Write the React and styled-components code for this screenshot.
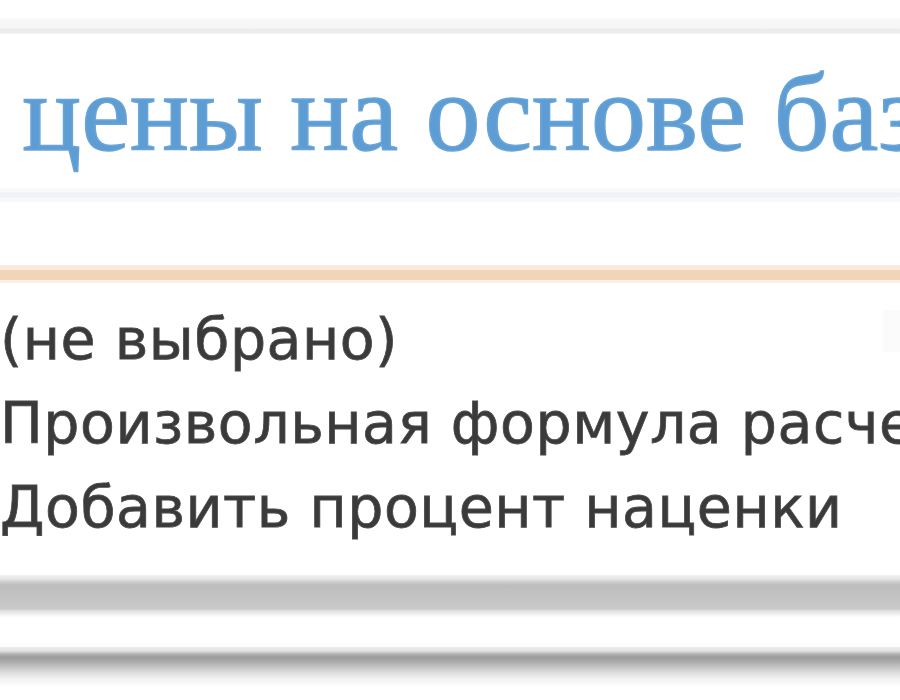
import styled, { createGlobalStyle } from "styled-components";

const GlobalStyle = createGlobalStyle`
  html, body {
    margin: 0;
    padding: 0;
    background: #ffffff;
    overflow: hidden;
  }
`;

const options = [
  "(не выбрано)",
  "Произвольная формула расчета цены",
  "Добавить процент наценки",
];

export default function App() {
  return (
    <>
      <GlobalStyle />
      <Page>
        <TopStrip />
        <TitleBox>
          <Title>Расчёт цены на основе базовой цены</Title>
        </TitleBox>
        <Divider />
        <Gap />
        <SelectPanel>
          <OptionList>
            {options.map((o) => (
              <Option key={o}>{o}</Option>
            ))}
          </OptionList>
          <ScrollHint />
        </SelectPanel>
        <Shelf />
        <Spacer />
        <Rail />
      </Page>
    </>
  );
}

const Page = styled.div`
  width: 900px;
  height: 700px;
  display: flex;
  flex-direction: column;
  overflow: hidden;
`;

const TopStrip = styled.div`
  height: 34px;
  flex-shrink: 0;
  background: linear-gradient(
    to bottom,
    #ffffff 0px,
    #ffffff 18px,
    #f8f8f8 19px,
    #f6f6f6 28px,
    #ececec 29px,
    #ececec 33px,
    #ffffff 34px
  );
`;

const TitleBox = styled.div`
  height: 154px;
  flex-shrink: 0;
  overflow: hidden;
`;

const Title = styled.h1`
  margin: 0;
  padding-top: 14px;
  white-space: nowrap;
  text-indent: -314px;
  font-family: "Liberation Serif", "Times New Roman", serif;
  font-weight: normal;
  font-size: 110px;
  line-height: 130px;
  color: #5e9dd3;
  -webkit-text-stroke: 1.4px #6aa5d8;
`;

const Divider = styled.div`
  height: 14px;
  flex-shrink: 0;
  background: linear-gradient(
    to bottom,
    #f7f9fb 0px,
    #f7f9fb 4px,
    #eef3f8 5px,
    #eef3f8 9px,
    #f6f8fb 10px,
    #f6f8fb 14px
  );
`;

const Gap = styled.div`
  height: 63px;
  flex-shrink: 0;
`;

const SelectPanel = styled.div`
  position: relative;
  height: 305px;
  flex-shrink: 0;
  border-top: 5px solid #fcebdd;
  box-shadow: inset 0 10px 0 #f2d4bb, inset 0 13px 0 #fbefe6;
  overflow: hidden;
`;

const OptionList = styled.ul`
  list-style: none;
  margin: 0;
  padding: 27px 0 0 0;
`;

const Option = styled.li`
  white-space: nowrap;
  font-family: "DejaVu Sans", Verdana, sans-serif;
  font-size: 57px;
  line-height: 84px;
  letter-spacing: 0.5px;
  color: #3a3a3a;
  -webkit-text-stroke: 0.8px #4a4a4a;
`;

const ScrollHint = styled.div`
  position: absolute;
  right: 0;
  top: 40px;
  width: 17px;
  height: 42px;
  background: #fbfbfb;
`;

const Shelf = styled.div`
  height: 42px;
  flex-shrink: 0;
  background: linear-gradient(
    to bottom,
    #f0f0f0 0px,
    #e6e6e6 4px,
    #d4d4d4 6px,
    #bdbdbd 10px,
    #c4c4c4 24px,
    #cacaca 34px,
    #e2e2e2 36px,
    #f4f4f4 40px,
    #ffffff 42px
  );
`;

const Spacer = styled.div`
  height: 30px;
  flex-shrink: 0;
`;

const Rail = styled.div`
  height: 40px;
  flex-shrink: 0;
  background: linear-gradient(
    to bottom,
    #ececec 0px,
    #e2e2e2 4px,
    #b4b4b4 7px,
    #9c9c9c 10px,
    #a8a8a8 14px,
    #c4c4c4 20px,
    #dedede 26px,
    #f2f2f2 32px,
    #ffffff 40px
  );
`;
